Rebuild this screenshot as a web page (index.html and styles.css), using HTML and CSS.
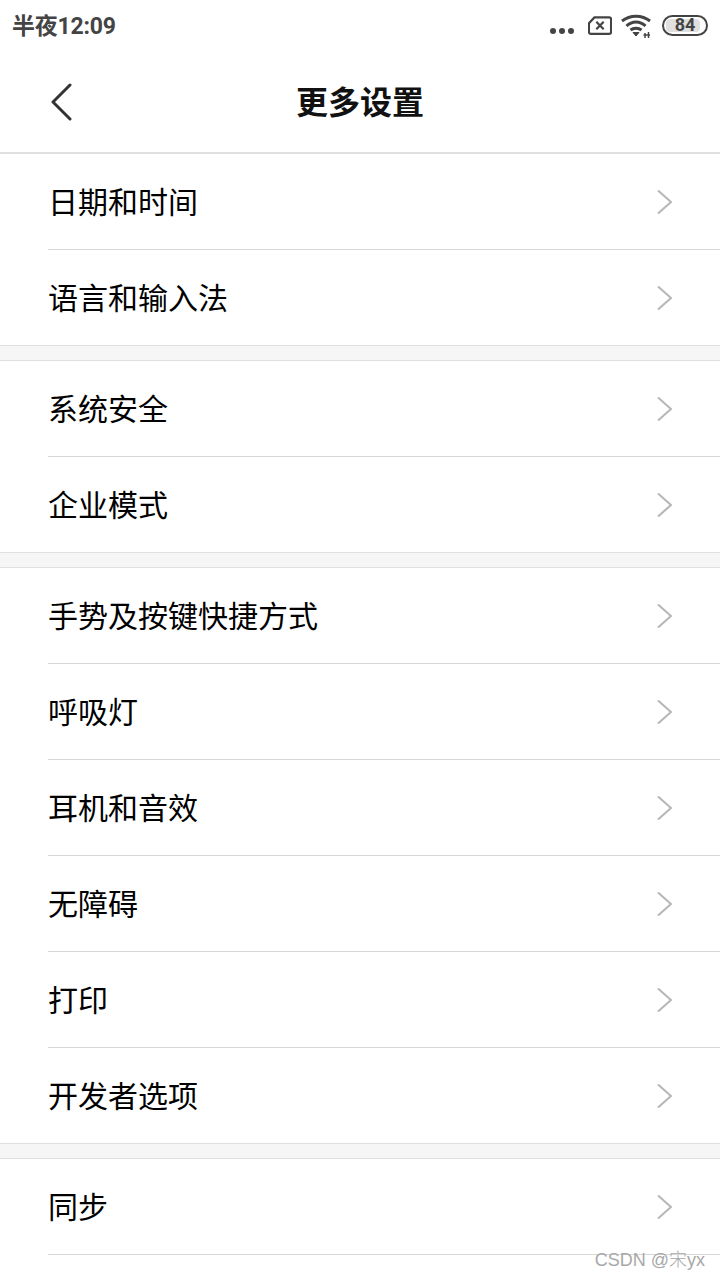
FILE: index.html
```html
<!DOCTYPE html>
<html lang="zh-CN">
<head>
    <meta charset="UTF-8">
    <meta name="viewport" content="width=device-width, initial-scale=1.0">
    <title>更多设置</title>
    <link rel="stylesheet" href="styles.css">
</head>
<body>
    <div class="status-bar">
        <span class="clock">半夜12:09</span>
        <div class="status-icons">
            <svg class="dots" width="26" height="8" viewBox="0 0 26 8"><circle cx="4" cy="4" r="3"/><circle cx="13" cy="4" r="3"/><circle cx="22" cy="4" r="3"/></svg>
            <svg class="sim" width="24" height="19" viewBox="0 0 26 20"><path d="M7 1.200H23a2 2 0 0 1 2 2V17a2 2 0 0 1-2 2H3a2 2 0 0 1-2-2V7.500z"/><path d="M9 6l8 8M17 6l-8 8"/></svg>
            <svg class="wifi" width="30" height="24" viewBox="0 0 30 24"><path d="M1 7C9 .5 21 .5 29 7"/><path d="M5.500 12C11 6.500 19 6.500 24.500 12"/><path d="M9.500 16C12.500 13.500 17.500 13.500 20.500 16"/><path class="fill" d="M12 18.500h6l-3 3.500z"/><path class="thin" d="M24 19v5M27.500 18v6M22.500 21h6.500"/></svg>
            <div class="battery"><span class="battery-level"></span><span class="battery-num">84</span></div>
        </div>
    </div>

    <header class="nav">
        <svg class="back" width="24" height="38" viewBox="0 0 24 38"><path d="M20 2L3 19l17 17"/></svg>
        <h1>更多设置</h1>
    </header>

    <div class="group">
        <a class="row"><span>日期和时间</span><svg class="chev" width="16" height="26" viewBox="0 0 16 26"><path d="M2 1.500L15 13 2 24.500"/></svg></a>
        <a class="row"><span>语言和输入法</span><svg class="chev" width="16" height="26" viewBox="0 0 16 26"><path d="M2 1.500L15 13 2 24.500"/></svg></a>
    </div>
    <div class="group">
        <a class="row"><span>系统安全</span><svg class="chev" width="16" height="26" viewBox="0 0 16 26"><path d="M2 1.500L15 13 2 24.500"/></svg></a>
        <a class="row"><span>企业模式</span><svg class="chev" width="16" height="26" viewBox="0 0 16 26"><path d="M2 1.500L15 13 2 24.500"/></svg></a>
    </div>
    <div class="group">
        <a class="row"><span>手势及按键快捷方式</span><svg class="chev" width="16" height="26" viewBox="0 0 16 26"><path d="M2 1.500L15 13 2 24.500"/></svg></a>
        <a class="row"><span>呼吸灯</span><svg class="chev" width="16" height="26" viewBox="0 0 16 26"><path d="M2 1.500L15 13 2 24.500"/></svg></a>
        <a class="row"><span>耳机和音效</span><svg class="chev" width="16" height="26" viewBox="0 0 16 26"><path d="M2 1.500L15 13 2 24.500"/></svg></a>
        <a class="row"><span>无障碍</span><svg class="chev" width="16" height="26" viewBox="0 0 16 26"><path d="M2 1.500L15 13 2 24.500"/></svg></a>
        <a class="row"><span>打印</span><svg class="chev" width="16" height="26" viewBox="0 0 16 26"><path d="M2 1.500L15 13 2 24.500"/></svg></a>
        <a class="row"><span>开发者选项</span><svg class="chev" width="16" height="26" viewBox="0 0 16 26"><path d="M2 1.500L15 13 2 24.500"/></svg></a>
    </div>
    <div class="group group-last">
        <a class="row"><span>同步</span><svg class="chev" width="16" height="26" viewBox="0 0 16 26"><path d="M2 1.500L15 13 2 24.500"/></svg></a>
    </div>

    <div class="watermark">CSDN @宋yx</div>
</body>
</html>
```

FILE: styles.css
```css
html, body {
    margin: 0;
    padding: 0;
    height: 1280px;
    overflow: hidden;
}

body {
    position: relative;
    display: flex;
    flex-direction: column;
    background: #f6f6f6;
    color: #000;
    font-family: "Noto Sans CJK SC", Roboto, sans-serif;
}

.status-bar {
    display: flex;
    align-items: center;
    justify-content: space-between;
    box-sizing: border-box;
    height: 52px;
    padding: 0 12px;
    background: #fff;
}

.clock {
    margin-bottom: 4px;
    font-family: Roboto, "Noto Sans CJK SC", sans-serif;
    font-size: 23px;
    font-weight: 700;
    color: #444;
    letter-spacing: -0.2px;
}

.status-icons {
    display: flex;
    align-items: center;
    gap: 9px;
    margin-bottom: 2px;
}

.dots {
    margin-top: 12px;
    margin-right: 4px;
    fill: #444;
}

.sim path, .wifi path {
    fill: none;
    stroke: #444;
    stroke-width: 2.400;
}

.sim path {
    stroke-linejoin: round;
}

.wifi {
    margin-top: 2px;
    margin-right: 2px;
}

.wifi path {
    stroke-width: 3;
}

.wifi .fill {
    fill: #444;
    stroke-width: 1;
}

.wifi .thin {
    stroke-width: 1.500;
}

.battery {
    position: relative;
    display: flex;
    align-items: center;
    justify-content: center;
    box-sizing: border-box;
    width: 46px;
    height: 21px;
    border: 2px solid #444;
    border-radius: 11px;
    overflow: hidden;
    background: #fff;
}

.battery-level {
    position: absolute;
    left: 2px;
    top: 2px;
    bottom: 2px;
    width: 34px;
    background: #e0e0e0;
    border-radius: 4px;
}

.battery-num {
    position: relative;
    font-family: Roboto, sans-serif;
    font-size: 18px;
    font-weight: 700;
    line-height: 1;
    color: #444;
}

.nav {
    position: relative;
    display: flex;
    align-items: center;
    justify-content: center;
    height: 96px;
    padding-bottom: 4px;
    background: #fff;
    border-bottom: 2px solid #e0e0e0;
}

.nav h1 {
    margin: 0;
    font-size: 32px;
    font-weight: 700;
    color: #111;
}

.back {
    position: absolute;
    left: 50px;
    top: 31px;
}

.back path {
    fill: none;
    stroke: #333;
    stroke-width: 3;
    stroke-linecap: round;
    stroke-linejoin: round;
}

.group {
    background: #fff;
    padding-left: 48px;
    border-bottom: 1px solid #e0e0e0;
    margin-bottom: 14px;
}

.group + .group {
    border-top: 1px solid #e0e0e0;
}

.group-last {
    flex: 1;
    margin-bottom: 0;
    border-bottom: none;
}

.row {
    display: flex;
    align-items: center;
    justify-content: space-between;
    box-sizing: border-box;
    height: 96px;
    padding-right: 48px;
    font-size: 30px;
    border-bottom: 1px solid #d8d8d8;
}

.row span {
    padding-bottom: 4px;
}

.group .row:last-child {
    height: 95px;
    border-bottom: none;
}

.group-last .row:last-child {
    height: 96px;
    border-bottom: 1px solid #d8d8d8;
}

.chev path {
    fill: none;
    stroke: #b8b8b8;
    stroke-width: 2.200;
}

.watermark {
    position: absolute;
    right: 15px;
    bottom: 9px;
    font-family: "Liberation Sans", "Noto Sans CJK SC", sans-serif;
    font-size: 18px;
    font-weight: 300;
    color: #a8a8a8;
}
```
